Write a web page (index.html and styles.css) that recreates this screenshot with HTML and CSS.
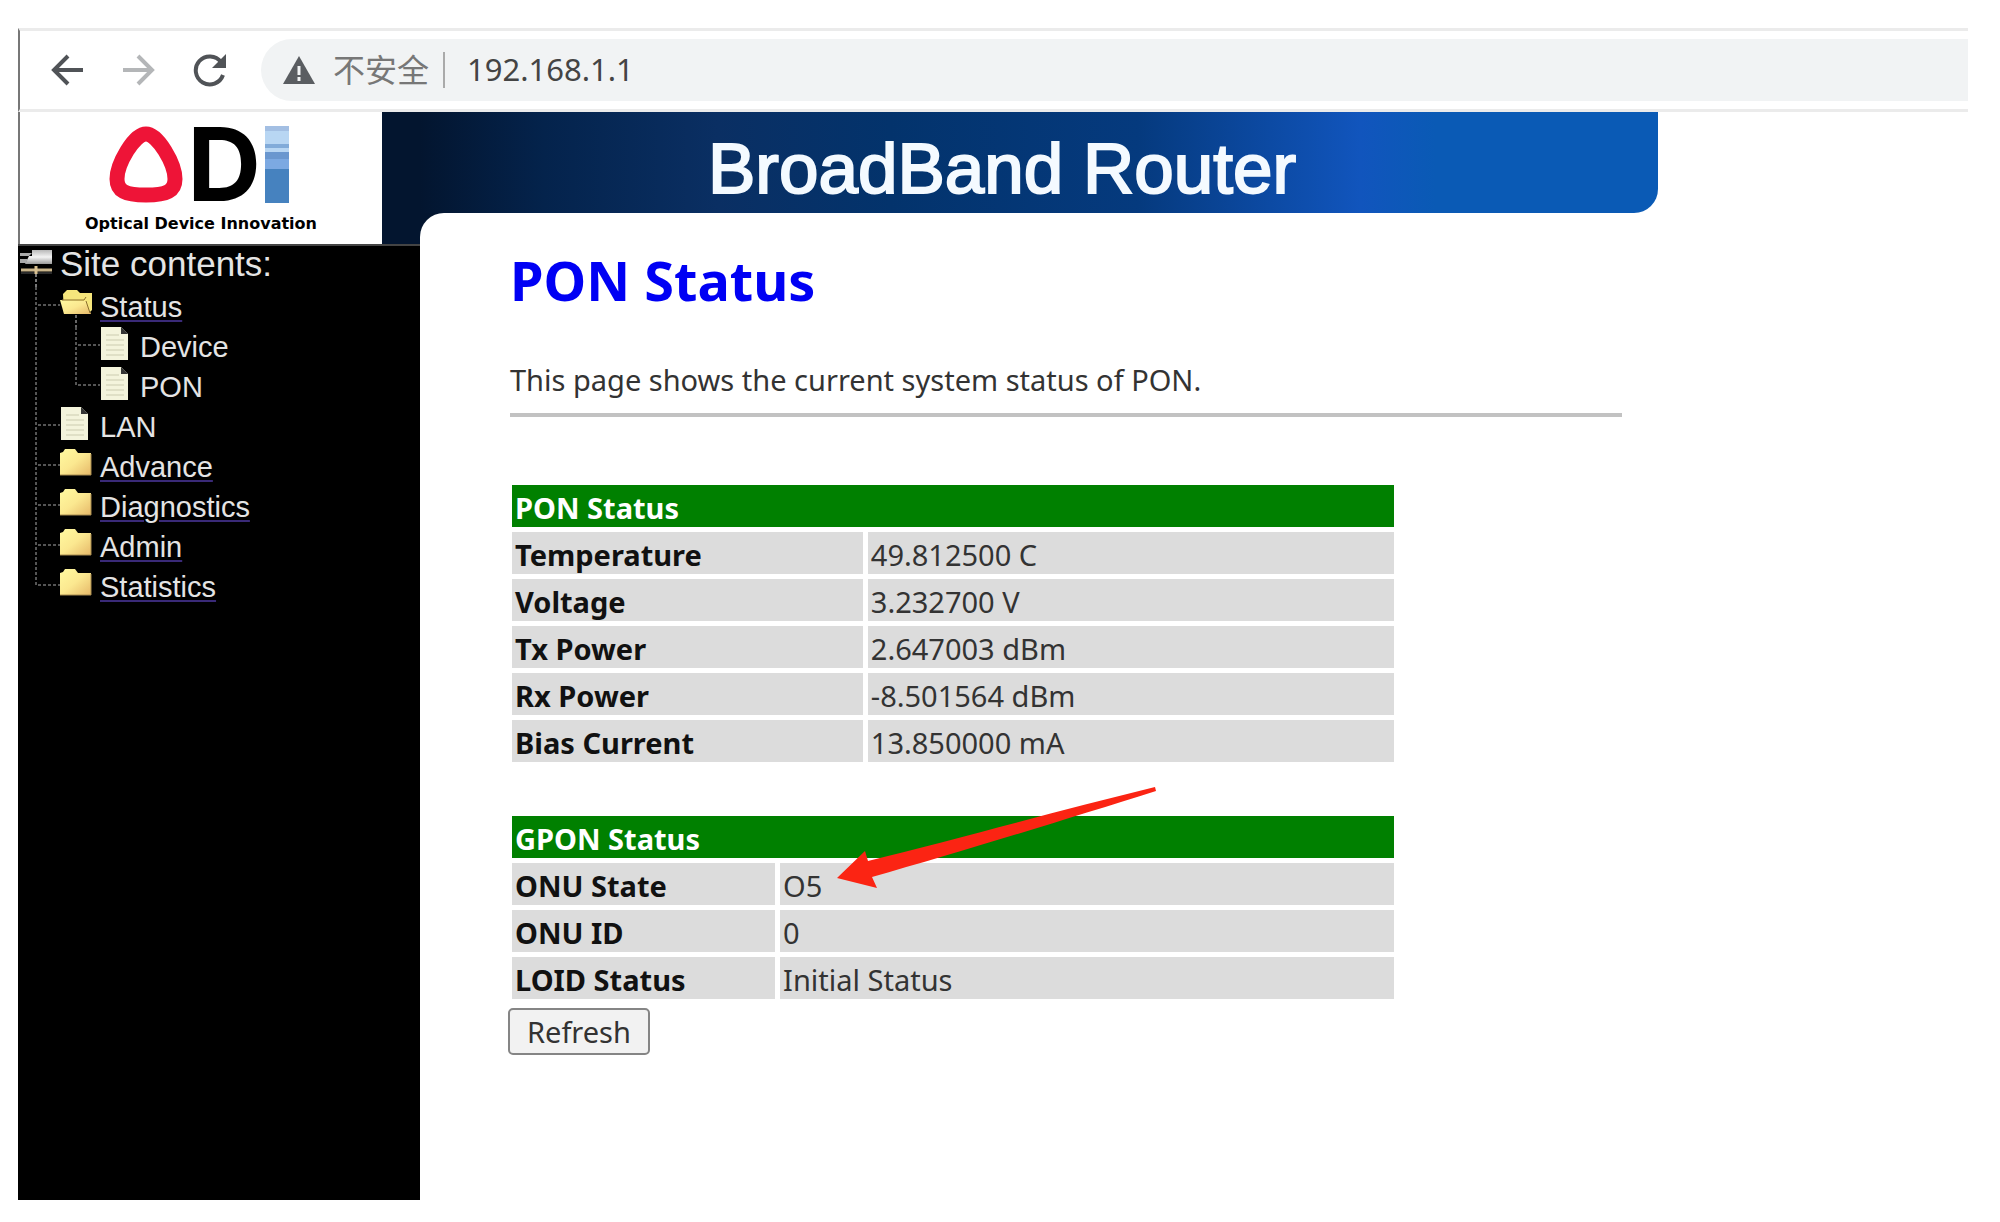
FILE: index.html
```html
<!DOCTYPE html>
<html lang="en">
<head>
    <meta charset="UTF-8">
    <title>BroadBand Router</title>
    <meta name="viewport" content="width=device-width, initial-scale=1.0">
    <link rel="stylesheet" href="styles.css">
</head>
<body>
    <!-- tree icons -->
    <svg class="sprite" width="0" height="0">
        <defs>
            <linearGradient id="gold" x1="0" y1="0" x2="1" y2="1">
                <stop offset="0" stop-color="#fff9a0"/>
                <stop offset="0.5" stop-color="#fbe890"/>
                <stop offset="1" stop-color="#e6b868"/>
            </linearGradient>
            <linearGradient id="silver" x1="0" y1="0" x2="0" y2="1">
                <stop offset="0" stop-color="#b8b8b8"/>
                <stop offset="0.5" stop-color="#f4f4f4"/>
                <stop offset="1" stop-color="#9a9a9a"/>
            </linearGradient>
        </defs>
        <symbol id="root" viewBox="0 0 40 41">
            <path d="M12 4h20v14H5l4-8h3z" fill="url(#silver)"/>
            <path d="M0 7h12l-3 3H0zM0 13h8l-2 4H0z" fill="#aaa"/>
            <path d="M1 24h31" stroke="#c9b48a" stroke-width="3"/>
            <path d="M1 27h31" stroke="#555" stroke-width="1"/>
            <path d="M16 20v8" stroke="#d8c090" stroke-width="3"/>
            <path d="M16 28v13" stroke="#777" stroke-width="2" stroke-dasharray="3 2"/>
        </symbol>
        <symbol id="tee" viewBox="0 0 40 40">
            <path d="M16 0v40M18 18h22" stroke="#555" stroke-width="2" stroke-dasharray="3 2" fill="none"/>
        </symbol>
        <symbol id="end" viewBox="0 0 40 40">
            <path d="M16 0v18h24" stroke="#555" stroke-width="2" stroke-dasharray="3 2" fill="none"/>
        </symbol>
        <symbol id="bar" viewBox="0 0 40 40">
            <path d="M16 0v40" stroke="#555" stroke-width="2" stroke-dasharray="3 2"/>
        </symbol>
        <symbol id="folder" viewBox="0 0 40 40">
            <path d="M0 6l3-1 2-3h10l3 4h13v22H0z" fill="url(#gold)"/>
            <path d="M0 28h31V7" fill="none" stroke="#a88c50" stroke-width="1"/>
        </symbol>
        <symbol id="folder-open" viewBox="0 0 40 40">
            <path d="M3 7l4-4h10l3 3h12v17l-4 4H4z" fill="#f6e67c"/>
            <path d="M0 13l26 1 5 13H4z" fill="url(#gold)"/>
            <path d="M2 13h22l2-3M26 14l4 12" fill="none" stroke="#8a6f2c" stroke-width="1"/>
            <path d="M16 28v12" stroke="#666" stroke-width="2" stroke-dasharray="3 2"/>
        </symbol>
        <symbol id="page" viewBox="0 0 40 40">
            <path d="M1 0h20l7 7v26H1z" fill="#f4f4dc"/>
            <path d="M21 0v7h7z" fill="#333"/>
            <path d="M6 8h13M6 13h18M6 18h18M6 23h18M6 28h18" stroke="#e0e0c6" stroke-width="2"/>
        </symbol>
    </svg>

    <div class="window">
        <div class="toolbar">
            <button class="nav-button" aria-label="Back">
                <svg width="34" height="34" viewBox="0 0 34 34"><path d="M33 17H4M18 3L4 17l14 14" fill="none" stroke="#505357" stroke-width="4"/></svg>
            </button>
            <button class="nav-button" aria-label="Forward">
                <svg width="34" height="34" viewBox="0 0 34 34"><path d="M2 17h29M17 3l14 14-14 14" fill="none" stroke="#b4b6b8" stroke-width="4"/></svg>
            </button>
            <button class="nav-button" aria-label="Reload">
                <svg width="34" height="34" viewBox="0 0 34 34"><path d="M29 9A14 14 0 1 0 31 22" fill="none" stroke="#505357" stroke-width="4"/><path d="M34 1v14H20z" fill="#505357"/></svg>
            </button>
            <div class="address">
                <svg width="32" height="28" viewBox="0 0 32 28"><path d="M16 0l16 28H0z" fill="#5a5d61"/><path d="M16 10v9M16 21v4" stroke="#f1f3f4" stroke-width="3"/></svg>
                <span class="insecure">不安全</span>
                <input type="text" class="url" value="192.168.1.1" aria-label="Address">
            </div>
        </div>

        <div class="frames">
            <div class="side">
                <div class="side-top">
                    <div class="brand">
                        <div class="logo">
                            <svg width="74" height="77" viewBox="0 0 74 77"><path d="M37 8C25 8 8 38 8 53c0 12 8 16 29 16s29-4 29-16C66 38 49 8 37 8z" fill="none" stroke="#ee1437" stroke-width="15"/></svg>
                            <span class="logo-d">D</span>
                            <span class="logo-i"></span>
                        </div>
                        <div class="tagline">Optical Device Innovation</div>
                    </div>
                </div>
                <nav class="tree">
                    <div class="row root"><svg><use href="#root"/></svg>Site contents:</div>
                    <div class="row"><svg><use href="#tee"/></svg><svg><use href="#folder-open"/></svg><a href="#" class="group">Status</a></div>
                    <div class="row"><svg><use href="#bar"/></svg><svg><use href="#tee"/></svg><svg><use href="#page"/></svg><a href="#">Device</a></div>
                    <div class="row"><svg><use href="#bar"/></svg><svg><use href="#end"/></svg><svg><use href="#page"/></svg><a href="#">PON</a></div>
                    <div class="row"><svg><use href="#tee"/></svg><svg><use href="#page"/></svg><a href="#">LAN</a></div>
                    <div class="row"><svg><use href="#tee"/></svg><svg><use href="#folder"/></svg><a href="#" class="group">Advance</a></div>
                    <div class="row"><svg><use href="#tee"/></svg><svg><use href="#folder"/></svg><a href="#" class="group">Diagnostics</a></div>
                    <div class="row"><svg><use href="#tee"/></svg><svg><use href="#folder"/></svg><a href="#" class="group">Admin</a></div>
                    <div class="row"><svg><use href="#end"/></svg><svg><use href="#folder"/></svg><a href="#" class="group">Statistics</a></div>
                </nav>
            </div>

            <div class="main">
                <div class="banner">BroadBand Router</div>
                <div class="content">
                    <h1>PON Status</h1>
                    <p>This page shows the current system status of PON.</p>
                    <hr>
                    <table class="pon">
                        <tr><th colspan="2" class="head">PON Status</th></tr>
                        <tr><th>Temperature</th><td>49.812500 C</td></tr>
                        <tr><th>Voltage</th><td>3.232700 V</td></tr>
                        <tr><th>Tx Power</th><td>2.647003 dBm</td></tr>
                        <tr><th>Rx Power</th><td>-8.501564 dBm</td></tr>
                        <tr><th>Bias Current</th><td>13.850000 mA</td></tr>
                    </table>
                    <div class="gpon-box">
                        <table class="gpon">
                            <tr><th colspan="2" class="head">GPON Status</th></tr>
                            <tr><th>ONU State</th><td>O5</td></tr>
                            <tr><th>ONU ID</th><td>0</td></tr>
                            <tr><th>LOID Status</th><td>Initial Status</td></tr>
                        </table>
                        <svg class="arrow" width="320" height="102" viewBox="0 0 320 102"><path d="M0 91L28 64l3 10C120 52 220 24 318 0l1 4C230 32 120 66 35 90l5 11z" fill="#fb2413"/></svg>
                    </div>
                    <button class="refresh">Refresh</button>
                </div>
            </div>
        </div>
    </div>
</body>
</html>
```
FILE: styles.css
```css
* {
    box-sizing: border-box;
}
body {
    margin: 0;
    background: #fff;
    color: #333;
    font-family: "Noto Sans", "Noto Sans CJK SC", sans-serif;
    font-size: 29px;
}
.sprite {
    position: absolute;
}
.window {
    display: flex;
    flex-direction: column;
    min-height: calc(100vh - 50px);
    margin: 28px 32px 22px 18px;
}

/* browser bar */
.toolbar {
    display: flex;
    align-items: center;
    height: 84px;
    padding-left: 30px;
    border-top: 3px solid #ebebeb;
    border-bottom: 3px solid #ebebeb;
    border-left: 2px solid #777;
}
.nav-button {
    display: flex;
    width: 34px;
    margin-right: 37px;
    padding: 0;
    border: none;
    background: none;
}
.nav-button:nth-child(3) {
    margin-right: 35px;
}
.address {
    display: flex;
    flex: 1;
    align-items: center;
    height: 62px;
    padding-left: 22px;
    border-radius: 31px 0 0 31px;
    background: #f1f3f4;
}
.insecure {
    margin: 0 14px 0 18px;
    color: #777;
    font-size: 32px;
    line-height: 36px;
}
.url {
    flex: 1;
    height: 36px;
    padding: 0 0 2px 22px;
    border: none;
    border-left: 2px solid #aaa;
    background: none;
    color: #444;
    font-family: inherit;
    font-size: 31px;
    outline: none;
}

.frames {
    display: flex;
    flex: 1;
}

/* left frame */
.side {
    display: flex;
    flex-direction: column;
    width: 402px;
    background: #000;
}
.side-top {
    height: 134px;
    background: #03152f;
    border-bottom: 2px solid #444;
}
.brand {
    width: 364px;
    height: 132px;
    padding-top: 14px;
    border-left: 2px solid #777;
    background: #fff;
    text-align: center;
}
.logo {
    display: flex;
    justify-content: center;
    gap: 4px;
    height: 77px;
    padding-right: 4px;
}
.logo-d {
    color: #000;
    font-family: Inter, sans-serif;
    font-size: 102px;
    font-weight: 700;
    line-height: 77px;
}
.logo-i {
    width: 24px;
    height: 77px;
    background: linear-gradient(#a3bfe3 0 5px, #b8d6f3 5px 18px, #82abd9 18px 22px, #b8d6f3 22px 26px, #6a97cf 26px 33px, #7ca9e2 33px 43px, #4682bf 43px);
}
.tagline {
    margin-top: 12px;
    color: #000;
    font-family: "DejaVu Sans", sans-serif;
    font-size: 16px;
    font-weight: bold;
    line-height: 18px;
}
.tree {
    color: #e4e4e4;
    font-family: "Liberation Sans", Arial, sans-serif;
    font-size: 29px;
    padding-left: 2px;
}
.row {
    display: flex;
    height: 40px;
    line-height: 40px;
}
.row svg {
    width: 40px;
    height: 40px;
}
.row a {
    color: #e4e4e4;
    text-decoration: none;
}
.row a.group {
    text-decoration: underline;
    text-decoration-color: #3a2a78;
    text-decoration-thickness: 2px;
    text-underline-offset: 3px;
}
.root {
    height: 41px;
    font-size: 35px;
    line-height: 36px;
}
.root svg {
    height: 41px;
}

/* right frame */
.main {
    flex: 1;
    background: linear-gradient(#03152f, #03152f) no-repeat 0 0 / 40px 134px;
}
.banner {
    max-width: 1238px;
    height: 101px;
    padding-left: 288px;
    border-bottom-right-radius: 24px;
    background: linear-gradient(90deg, #03152f, #04234c 10%, #0a2f63 24%, #03336c 38%, #053a7e 58%, #1155bd 76%, #0a5ab5 82%);
    color: #f4faff;
    font-family: "Liberation Sans", Arial, sans-serif;
    font-size: 71px;
    line-height: 114px;
    -webkit-text-stroke: 2px #f4faff;
}
.content {
    padding: 34px 37px 0 90px;
    border-top-left-radius: 24px;
    background: #fff;
}
h1 {
    margin: 0;
    color: #0000f4;
    font-size: 54px;
    line-height: 66px;
}
p {
    margin: 47px 0 13px;
    line-height: 40px;
}
hr {
    max-width: 1112px;
    height: 4px;
    margin: 0;
    border: none;
    background: #c2c2c2;
}
table {
    width: 100%;
    max-width: 892px;
    border-spacing: 5px;
}
th, td {
    height: 42px;
    padding: 4px 3px 0;
    background: #dcdcdc;
    line-height: 38px;
    text-align: left;
}
th {
    color: #111;
}
.head {
    background: #008000;
    color: #fff;
}
.pon {
    margin: 63px 0 44px -3px;
}
.pon th {
    width: 40%;
}
.gpon th {
    width: 30%;
}
.gpon-box {
    position: relative;
    margin-left: -3px;
}
/* arrow pointing at the ONU state */
.arrow {
    position: absolute;
    top: -24px;
    left: 330px;
}
.refresh {
    display: block;
    height: 47px;
    margin: 4px 0 0 -2px;
    padding: 0 17px;
    border: 2px solid #858585;
    border-radius: 5px;
    background: #f2f2f2;
    color: #333;
    font-family: inherit;
    font-size: 29px;
    line-height: 40px;
}
```
